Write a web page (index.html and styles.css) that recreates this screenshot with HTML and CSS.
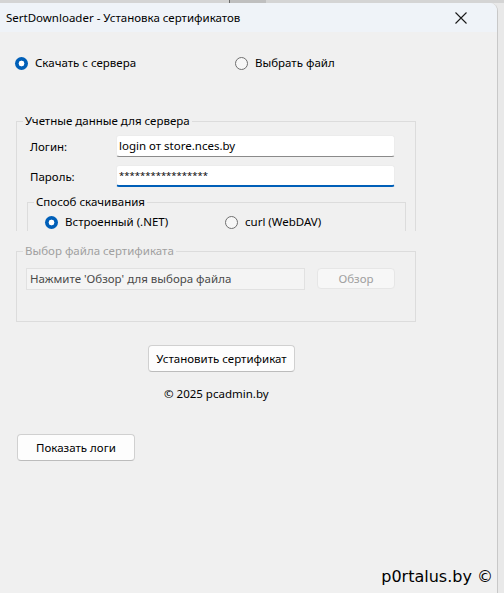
FILE: index.html
```html
<!DOCTYPE html>
<html lang="ru">
<head>
<meta charset="utf-8">
<title>SertDownloader</title>
<link rel="stylesheet" href="styles.css">
</head>
<body>
<div class="topstrip"><span class="tab"></span></div>
<div class="window">
  <div class="titlebar">
    <span class="title">SertDownloader - Установка сертификатов</span>
    <svg class="close" width="12" height="12" viewBox="0 0 12 12"><path d="M0.5 0.5 L11.5 11.5 M11.5 0.5 L0.5 11.5" stroke="#1a1a1a" stroke-width="1.1" fill="none"/></svg>
  </div>
  <div class="content">
    <div class="moderow">
      <label class="radio r-first"><span class="dot checked"></span>Скачать с сервера</label>
      <label class="radio"><span class="dot"></span>Выбрать файл</label>
    </div>

    <fieldset class="group g-cred">
      <legend>Учетные данные для сервера</legend>
      <div class="form">
        <span class="lbl">Логин:</span>
        <div class="input">login от store.nces.by</div>
        <span class="lbl">Пароль:</span>
        <div class="input focused"><span class="pw">*****************</span></div>
      </div>
      <fieldset class="group g-method">
        <legend>Способ скачивания</legend>
        <div class="methodrow">
          <label class="radio r-net"><span class="dot checked"></span>Встроенный (.NET)</label>
          <label class="radio"><span class="dot"></span>curl (WebDAV)</label>
        </div>
      </fieldset>
    </fieldset>

    <fieldset class="group g-file disabled">
      <legend>Выбор файла сертификата</legend>
      <div class="filerow">
        <div class="input dis">Нажмите 'Обзор' для выбора файла</div>
        <button class="btn btn-dis">Обзор</button>
      </div>
    </fieldset>

    <button class="btn btn-install">Установить сертификат</button>
    <div class="copy">© 2025 pcadmin.by</div>
    <button class="btn btn-logs">Показать логи</button>

    <div class="footer">p0rtalus.by ©</div>
  </div>
</div>
</body>
</html>
```
FILE: styles.css
```css
html, body {
  margin: 0;
  padding: 0;
}
body {
  width: 504px;
  height: 593px;
  overflow: hidden;
  background: #e9e9e9;
  font-family: "Noto Sans", "Liberation Sans", sans-serif;
  font-size: 11.5px;
  color: #000;
}
.topstrip {
  height: 3px;
  background: #d4d4d4;
  display: flex;
}
.tab {
  margin-left: 229px;
  width: 36px;
  height: 3px;
  background: #bfbfbf;
  border-left: 1px solid #6a6a6a;
}
.window {
  width: 497px;
  height: 590px;
  border-right: 1px solid #c8c8c8;
  border-top-right-radius: 8px;
  overflow: hidden;
  background: #f0f0f0;
  display: flex;
  flex-direction: column;
}
.titlebar {
  height: 29px;
  flex: none;
  background: #eff3f8;
  display: flex;
  align-items: center;
  justify-content: space-between;
  padding: 0 30px 0 6px;
}
.title {
  font-size: 11.5px;
  color: #000;
}
.close {
  display: block;
}
.content {
  flex: 1;
  display: flex;
  flex-direction: column;
  align-items: flex-start;
  padding-left: 16px;
}
.moderow {
  margin-top: 23px;
  display: flex;
  height: 16px;
  align-items: center;
}
.radio {
  display: flex;
  align-items: center;
  line-height: 16px;
  white-space: nowrap;
}
.dot {
  width: 11px;
  height: 11px;
  border: 1px solid #6f6f6f;
  border-radius: 50%;
  background: #f7f7f7;
  margin-right: 7px;
  flex: none;
  box-sizing: content-box;
}
.dot.checked {
  width: 13px;
  height: 13px;
  border: none;
  background: radial-gradient(circle, #fff 0 2.6px, #005fb8 3.2px);
}
.r-first {
  width: 220px;
  margin-left: -1px;
}
.group {
  margin: 0;
  border: 1px solid #dcdcdc;
  border-bottom: none;
  padding: 0 0 0 6px;
  box-sizing: border-box;
}
.group legend {
  padding: 0 2px;
  line-height: 16px;
}
.g-cred {
  width: 400px;
  margin-top: 42px;
}
.form {
  margin-top: 6px;
  margin-left: 7px;
  display: grid;
  grid-template-columns: 86px 279px;
  grid-auto-rows: 22px;
  row-gap: 8px;
  align-items: center;
}
.input {
  height: 22px;
  box-sizing: border-box;
  background: #fff;
  border: 1px solid #ececec;
  border-bottom-color: #8a8a8a;
  border-radius: 3px;
  padding: 0 2px;
  line-height: 20px;
  white-space: nowrap;
  overflow: hidden;
}
.input.focused {
  border-bottom: 2px solid #005fb8;
  line-height: 17px;
}
.pw {
  font-size: 9.5px;
  letter-spacing: 0;
}
.g-method {
  width: 379px;
  margin-top: 7px;
  margin-left: 4px;
  padding-bottom: 1px;
}
.methodrow {
  margin-top: 4px;
  display: flex;
  height: 16px;
  align-items: center;
}
.r-net {
  width: 180px;
  margin-left: 11px;
}
.g-file {
  width: 400px;
  margin-top: 12px;
  border-bottom: 1px solid #dcdcdc;
  padding-bottom: 31px;
}
.g-file legend {
  color: #a0a0a0;
}
.filerow {
  margin-top: 9px;
  margin-left: 3px;
  display: flex;
  align-items: flex-start;
  gap: 12px;
}
.input.dis {
  width: 279px;
  background: #f4f4f4;
  border: 1px solid #e1e1e1;
  border-radius: 0;
  color: #4a4a4a;
  padding: 0 3px;
}
.btn {
  font-family: inherit;
  font-size: 11.5px;
  background: #fdfdfd;
  border: 1px solid #d0d0d0;
  border-bottom-color: #bcbcbc;
  border-radius: 4px;
  color: #000;
  padding: 0;
  box-sizing: border-box;
  margin: 0;
}
.btn-dis {
  width: 78px;
  height: 21px;
  background: #f7f7f7;
  border: 1px solid #e6e6e6;
  color: #a0a0a0;
}
.btn-install {
  margin-top: 23px;
  margin-left: 132px;
  width: 147px;
  height: 27px;
}
.copy {
  margin-top: 14px;
  margin-left: 148px;
  line-height: 16px;
}
.btn-logs {
  margin-top: 32px;
  margin-left: 1px;
  width: 118px;
  height: 27px;
}
.footer {
  margin-top: auto;
  align-self: flex-end;
  margin-right: 4px;
  margin-bottom: 6px;
  font-family: "DejaVu Sans", sans-serif;
  font-size: 16px;
  line-height: 20px;
}
```
